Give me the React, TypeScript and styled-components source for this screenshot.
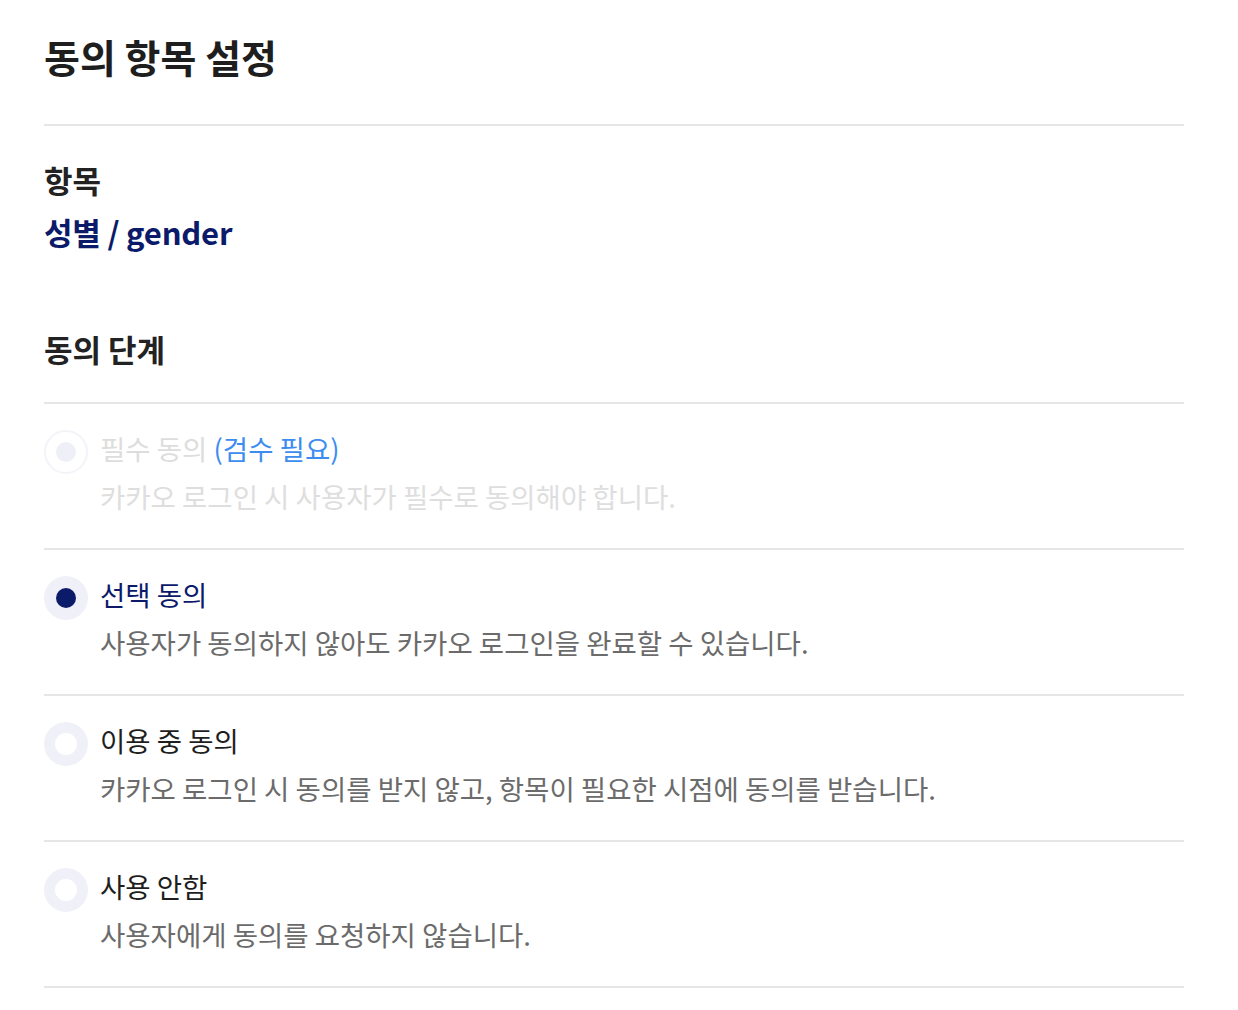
import styled, {createGlobalStyle, css} from "styled-components";

const GlobalStyle = createGlobalStyle`
  body {
    margin: 0;
    background: #fff;
    font-family: "Noto Sans CJK KR", "Noto Sans", sans-serif;
    color: #222;
  }
`

const Page = styled.div`
  padding: 0 54px 0 44px;
`

const Title = styled.h1`
  margin: 0;
  padding: 28px 0 40px;
  font-size: 39px;
  line-height: 56px;
  font-weight: 700;
  color: #1e1e1e;
  border-bottom: 2px solid #e6e6e6;
`

const Section = styled.section`
  padding-top: 34px;
`

const Label = styled.h2`
  margin: 0;
  font-size: 31px;
  line-height: 40px;
  font-weight: 700;
  color: #222;
`

const ItemName = styled.div`
  font-size: 31px;
  line-height: 46px;
  font-weight: 600;
  color: #0c1a6a;
  margin-top: 9px;
  letter-spacing: -0.2px;
`

const StepLabel = styled(Label)`
  margin-top: 74px;
  padding-bottom: 33px;
  border-bottom: 2px solid #e6e6e6;
`

const List = styled.ul`
  list-style: none;
  margin: 0;
  padding: 0;
`

const Option = styled.li`
  display: flex;
  gap: 12px;
  padding: 25px 0 33px;
  border-bottom: 2px solid #e6e6e6;
`

type RadioState = "disabled" | "checked" | "empty";

const Radio = styled.span<{ $state: RadioState }>`
  flex: none;
  width: 44px;
  height: 44px;
  margin-top: 1px;
  border-radius: 50%;
  box-sizing: border-box;
  display: flex;
  align-items: center;
  justify-content: center;
  background: #f0f1f8;

  &::after {
    content: "";
    width: 22px;
    height: 22px;
    border-radius: 50%;
    background: #fff;
  }

  ${(p) => p.$state === "checked" && css`
    &::after {
      width: 20px;
      height: 20px;
      background: #0c1a6a;
    }
  `}

  ${(p) => p.$state === "disabled" && css`
    background: #fff;
    border: 2px solid #f3f3f9;
    &::after {
      width: 20px;
      height: 20px;
      background: #eff0f7;
    }
  `}
`

const OptionText = styled.div`
  display: flex;
  flex-direction: column;
  gap: 10px;
`

const OptionTitle = styled.div<{ $tone: "disabled" | "active" | "normal" }>`
  font-size: 27.5px;
  line-height: 38px;
  color: ${(p) => p.$tone === "disabled" ? "#dddddd" : p.$tone === "active" ? "#0c1a6a" : "#1e1e1e"};
`

const Note = styled.span`
  color: #3d8df0;
`

const OptionDesc = styled.div<{ $disabled?: boolean }>`
  font-size: 27.5px;
  line-height: 38px;
  color: ${(p) => p.$disabled ? "#dedede" : "#6b6b6b"};
`

export default function App() {
    return (
        <Page>
            <GlobalStyle/>
            <Title>동의 항목 설정</Title>
            <Section>
                <Label>항목</Label>
                <ItemName>성별 / gender</ItemName>
                <StepLabel>동의 단계</StepLabel>
                <List>
                    <Option>
                        <Radio $state="disabled"/>
                        <OptionText>
                            <OptionTitle $tone="disabled">필수 동의 <Note>(검수 필요)</Note></OptionTitle>
                            <OptionDesc $disabled>카카오 로그인 시 사용자가 필수로 동의해야 합니다.</OptionDesc>
                        </OptionText>
                    </Option>
                    <Option>
                        <Radio $state="checked"/>
                        <OptionText>
                            <OptionTitle $tone="active">선택 동의</OptionTitle>
                            <OptionDesc>사용자가 동의하지 않아도 카카오 로그인을 완료할 수 있습니다.</OptionDesc>
                        </OptionText>
                    </Option>
                    <Option>
                        <Radio $state="empty"/>
                        <OptionText>
                            <OptionTitle $tone="normal">이용 중 동의</OptionTitle>
                            <OptionDesc>카카오 로그인 시 동의를 받지 않고, 항목이 필요한 시점에 동의를 받습니다.</OptionDesc>
                        </OptionText>
                    </Option>
                    <Option>
                        <Radio $state="empty"/>
                        <OptionText>
                            <OptionTitle $tone="normal">사용 안함</OptionTitle>
                            <OptionDesc>사용자에게 동의를 요청하지 않습니다.</OptionDesc>
                        </OptionText>
                    </Option>
                </List>
            </Section>
        </Page>
    )
}
